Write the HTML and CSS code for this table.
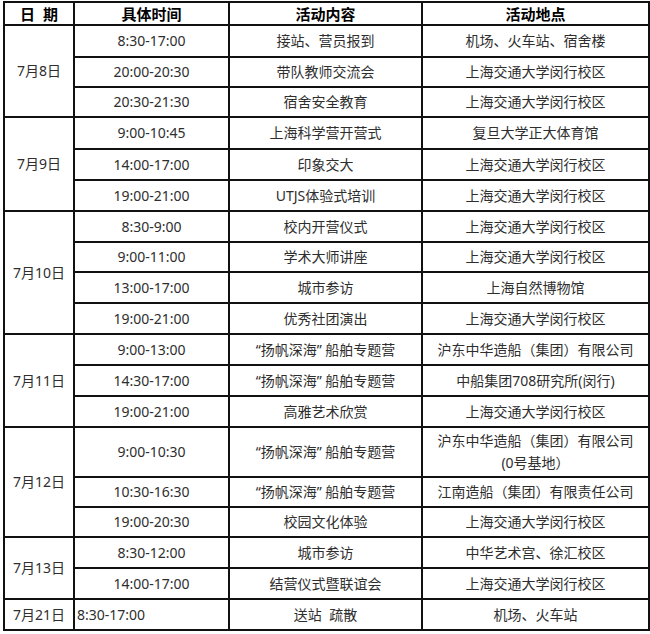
FILE: index.html
```html
<!DOCTYPE html>
<html lang="zh-CN">
<head>
<meta charset="utf-8">
<title>日程安排</title>
<link rel="stylesheet" href="styles.css">
</head>
<body>
<table class="schedule">
  <colgroup>
    <col class="c-date">
    <col class="c-time">
    <col class="c-act">
    <col class="c-place">
  </colgroup>
  <thead>
    <tr class="h23"><th>日&nbsp;&nbsp;期</th><th>具体时间</th><th>活动内容</th><th>活动地点</th></tr>
  </thead>
  <tbody>
    <tr class="h32"><td class="date" rowspan="3">7月8日</td><td>8:30-17:00</td><td>接站、营员报到</td><td>机场、火车站、宿舍楼</td></tr>
    <tr class="h30"><td>20:00-20:30</td><td>带队教师交流会</td><td>上海交通大学闵行校区</td></tr>
    <tr class="h30"><td>20:30-21:30</td><td>宿舍安全教育</td><td>上海交通大学闵行校区</td></tr>

    <tr class="h32"><td class="date" rowspan="3">7月9日</td><td>9:00-10:45</td><td>上海科学营开营式</td><td>复旦大学正大体育馆</td></tr>
    <tr class="h31"><td>14:00-17:00</td><td>印象交大</td><td>上海交通大学闵行校区</td></tr>
    <tr class="h31"><td>19:00-21:00</td><td>UTJS体验式培训</td><td>上海交通大学闵行校区</td></tr>

    <tr class="h31"><td class="date" rowspan="4">7月10日</td><td>8:30-9:00</td><td>校内开营仪式</td><td>上海交通大学闵行校区</td></tr>
    <tr class="h30"><td>9:00-11:00</td><td>学术大师讲座</td><td>上海交通大学闵行校区</td></tr>
    <tr class="h31"><td>13:00-17:00</td><td>城市参访</td><td>上海自然博物馆</td></tr>
    <tr class="h31"><td>19:00-21:00</td><td>优秀社团演出</td><td>上海交通大学闵行校区</td></tr>

    <tr class="h31"><td class="date" rowspan="3">7月11日</td><td>9:00-13:00</td><td>“扬帆深海” 船舶专题营</td><td>沪东中华造船（集团）有限公司</td></tr>
    <tr class="h31"><td>14:30-17:00</td><td>“扬帆深海” 船舶专题营</td><td>中船集团708研究所(闵行)</td></tr>
    <tr class="h31"><td>19:00-21:00</td><td>高雅艺术欣赏</td><td>上海交通大学闵行校区</td></tr>

    <tr class="h50"><td class="date" rowspan="3">7月12日</td><td>9:00-10:30</td><td>“扬帆深海” 船舶专题营</td><td class="two-line">沪东中华造船（集团）有限公司<br>(0号基地）</td></tr>
    <tr class="h30"><td>10:30-16:30</td><td>“扬帆深海” 船舶专题营</td><td>江南造船（集团）有限责任公司</td></tr>
    <tr class="h30"><td>19:00-20:30</td><td>校园文化体验</td><td>上海交通大学闵行校区</td></tr>

    <tr class="h31"><td class="date" rowspan="2">7月13日</td><td>8:30-12:00</td><td>城市参访</td><td>中华艺术宫、徐汇校区</td></tr>
    <tr class="h31"><td>14:00-17:00</td><td>结营仪式暨联谊会</td><td>上海交通大学闵行校区</td></tr>

    <tr class="h31"><td class="date">7月21日</td><td class="left">8:30-17:00</td><td>送站&nbsp;&nbsp;疏散</td><td>机场、火车站</td></tr>
  </tbody>
</table>
</body>
</html>
```

FILE: styles.css
```css
html, body {
  margin: 0;
  padding: 0;
  background: #ffffff;
}

body {
  padding: 1px 0 0 3px;
  font-family: "Noto Sans", "Noto Sans CJK SC", sans-serif;
}

.schedule {
  border-collapse: collapse;
  table-layout: fixed;
  width: 645px;
  box-shadow: 2px 2px 0 #dcdcdc;
}

.c-date { width: 70px; }
.c-time { width: 155px; }
.c-act { width: 193px; }
.c-place { width: 227px; }

.schedule th,
.schedule td {
  border: 2px solid #111111;
  padding: 0 2px;
  text-align: center;
  vertical-align: middle;
  white-space: nowrap;
  overflow: hidden;
}

.schedule th {
  font-size: 15px;
  font-weight: bold;
  color: #000000;
  line-height: 18px;
}

.schedule td {
  font-size: 14px;
  color: #2e2e2e;
  line-height: 18px;
}

.schedule td.left {
  text-align: left;
}

.schedule td.two-line {
  line-height: 22px;
}

.h23 { height: 23px; }
.h30 { height: 30px; }
.h31 { height: 31px; }
.h32 { height: 32px; }
.h50 { height: 50px; }
```
